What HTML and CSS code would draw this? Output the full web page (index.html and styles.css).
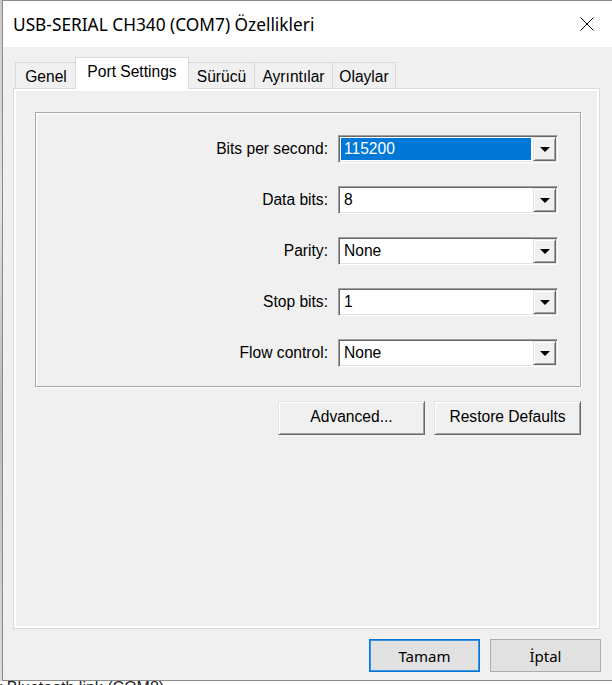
FILE: index.html
```html
<!DOCTYPE html>
<html>
<head>
<meta charset="utf-8">
<link rel="stylesheet" href="styles.css">
</head>
<body>
<div class="screen">
  <div class="main">
    <div class="edge"></div>
    <div class="dialog">
      <div class="titlebar">
        <span class="title">USB-SERIAL CH340 (COM7) Özellikleri</span>
        <svg class="close" width="14" height="14" viewBox="0 0 14 14"><path d="M0.5 0.5 L13.5 13.5 M13.5 0.5 L0.5 13.5" stroke="#000" stroke-width="1" fill="none"/></svg>
      </div>
      <div class="body">
        <div class="tabs">
          <div class="tab t-genel">Genel</div>
          <div class="tab active t-port">Port Settings</div>
          <div class="tab t-surucu">Sürücü</div>
          <div class="tab t-ayr">Ayrıntılar</div>
          <div class="tab t-ola">Olaylar</div>
        </div>
        <div class="panel">
          <div class="group">
            <div class="row"><span class="label">Bits per second:</span><div class="combo sel"><span class="val">115200</span><span class="dd"><i class="arrow"></i></span></div></div>
            <div class="row"><span class="label">Data bits:</span><div class="combo"><span class="val">8</span><span class="dd"><i class="arrow"></i></span></div></div>
            <div class="row"><span class="label">Parity:</span><div class="combo"><span class="val">None</span><span class="dd"><i class="arrow"></i></span></div></div>
            <div class="row"><span class="label">Stop bits:</span><div class="combo"><span class="val">1</span><span class="dd"><i class="arrow"></i></span></div></div>
            <div class="row"><span class="label">Flow control:</span><div class="combo"><span class="val">None</span><span class="dd"><i class="arrow"></i></span></div></div>
          </div>
          <div class="actions">
            <button class="btn3d">Advanced...</button>
            <button class="btn3d">Restore Defaults</button>
          </div>
        </div>
        <div class="footer">
          <button class="wbtn default">Tamam</button>
          <button class="wbtn">İptal</button>
        </div>
      </div>
    </div>
  </div>
  <div class="under"><span class="under-text">r Bluetooth link (COM8)</span></div>
</div>
</body>
</html>
```

FILE: styles.css
```css
html, body {
  margin: 0;
  padding: 0;
}
body {
  width: 612px;
  height: 685px;
  overflow: hidden;
  background: #ffffff;
  font-family: "Liberation Sans", Arial, sans-serif;
  font-size: 15.6px;
  color: #000;
}
.screen {
  display: flex;
  flex-direction: column;
  height: 685px;
}
.main {
  display: flex;
  height: 681px;
}
.edge {
  width: 2px;
  background: linear-gradient(#c9c9c9, #e2e2e2 30%, #b8b8b8 60%, #dcdcdc);
}
.dialog {
  flex: 1;
  display: flex;
  flex-direction: column;
  border: 1px solid #8a8a8a;
  border-right: none;
  background: #f0f0f0;
  box-sizing: border-box;
}
.titlebar {
  height: 46px;
  background: #ffffff;
  display: flex;
  align-items: center;
  justify-content: space-between;
  padding: 0 18px 0 10px;
}
.title {
  font-family: "Noto Sans", "Open Sans", sans-serif;
  font-size: 17.3px;
  color: #000;
}
.close {
  display: block;
}
.body {
  flex: 1;
  padding: 10px 12px 0 10px;
  display: flex;
  flex-direction: column;
}
.tabs {
  display: flex;
  align-items: flex-end;
  height: 32px;
  margin-bottom: -1px;
  padding-left: 2px;
}
.tab {
  height: 27px;
  box-sizing: border-box;
  border: 1px solid #d9d9d9;
  border-bottom: none;
  background: #f0f0f0;
  display: flex;
  align-items: center;
  justify-content: center;
  margin-right: -1px;
  padding-top: 2px;
  font-size: 15.6px;
}
.tab.active {
  height: 32px;
  background: #ffffff;
  position: relative;
  z-index: 1;
  margin-left: -1px;
  padding-top: 0;
  padding-bottom: 4px;
}
.t-genel { width: 62px; }
.t-port { width: 114px; }
.t-surucu { width: 67px; }
.t-ayr { width: 79px; }
.t-ola { width: 64px; }
.panel {
  height: 541px;
  box-sizing: border-box;
  border: 1px solid #d9d9d9;
  box-shadow: inset 0 0 0 2px #ffffff;
  background: #f0f0f0;
  padding: 23px 18px 0 21px;
}
.group {
  height: 275px;
  box-sizing: border-box;
  border: 1px solid #a9a9a9;
  box-shadow: inset 1px 1px 0 #ffffff, 1px 1px 0 #ffffff;
  padding: 22px 22px 0 0;
  display: flex;
  flex-direction: column;
  gap: 23px;
}
.row {
  display: flex;
  justify-content: flex-end;
  align-items: center;
  gap: 10px;
  height: 28px;
}
.label {
  font-size: 15.6px;
}
.combo {
  width: 220px;
  height: 28px;
  box-sizing: border-box;
  border: 1px solid;
  border-color: #a0a0a0 #ffffff #ffffff #a0a0a0;
  box-shadow: inset 1px 1px 0 #696969, inset -1px -1px 0 #e3e3e3;
  background: #ffffff;
  display: flex;
  padding: 1px;
}
.combo .val {
  flex: 1;
  display: flex;
  align-items: center;
  padding-left: 3px;
  margin: 1px 2px 1px 1px;
  font-size: 15.6px;
}
.combo.sel .val {
  background: #0078d7;
  color: #ffffff;
}
.dd {
  width: 23px;
  box-sizing: border-box;
  background: #f0f0f0;
  border: 1px solid;
  border-color: #e3e3e3 #696969 #696969 #e3e3e3;
  box-shadow: inset 1px 1px 0 #ffffff, inset -1px -1px 0 #a0a0a0;
  display: flex;
  align-items: center;
  justify-content: center;
}
.arrow {
  width: 0;
  height: 0;
  border-left: 5px solid transparent;
  border-right: 5px solid transparent;
  border-top: 5px solid #000;
  margin-top: 1px;
}
.actions {
  display: flex;
  justify-content: flex-end;
  gap: 9px;
  margin-top: 14px;
}
.btn3d {
  width: 147px;
  height: 34px;
  box-sizing: border-box;
  font-family: "Liberation Sans", Arial, sans-serif;
  font-size: 15.6px;
  color: #000;
  background: #f0f0f0;
  border: 1px solid;
  border-color: #e3e3e3 #696969 #696969 #e3e3e3;
  box-shadow: inset 1px 1px 0 #ffffff, inset -1px -1px 0 #a0a0a0;
  padding: 0 0 2px 0;
}
.footer {
  display: flex;
  justify-content: flex-end;
  gap: 10px;
  margin-top: 10px;
  margin-right: -1px;
}
.wbtn {
  width: 111px;
  height: 33px;
  box-sizing: border-box;
  font-family: "Noto Sans", "Open Sans", sans-serif;
  font-size: 15px;
  color: #000;
  background: #e1e1e1;
  border: 1px solid #adadad;
  padding: 0;
}
.wbtn.default {
  border: 1px solid #0078d7;
  box-shadow: inset 0 0 0 1px #3c92dc;
}
.under {
  height: 4px;
  overflow: hidden;
  background: #ffffff;
}
.under-text {
  display: block;
  margin-top: -1px;
  margin-left: -3px;
  line-height: 16px;
  font-size: 16px;
  color: #222;
}
```
